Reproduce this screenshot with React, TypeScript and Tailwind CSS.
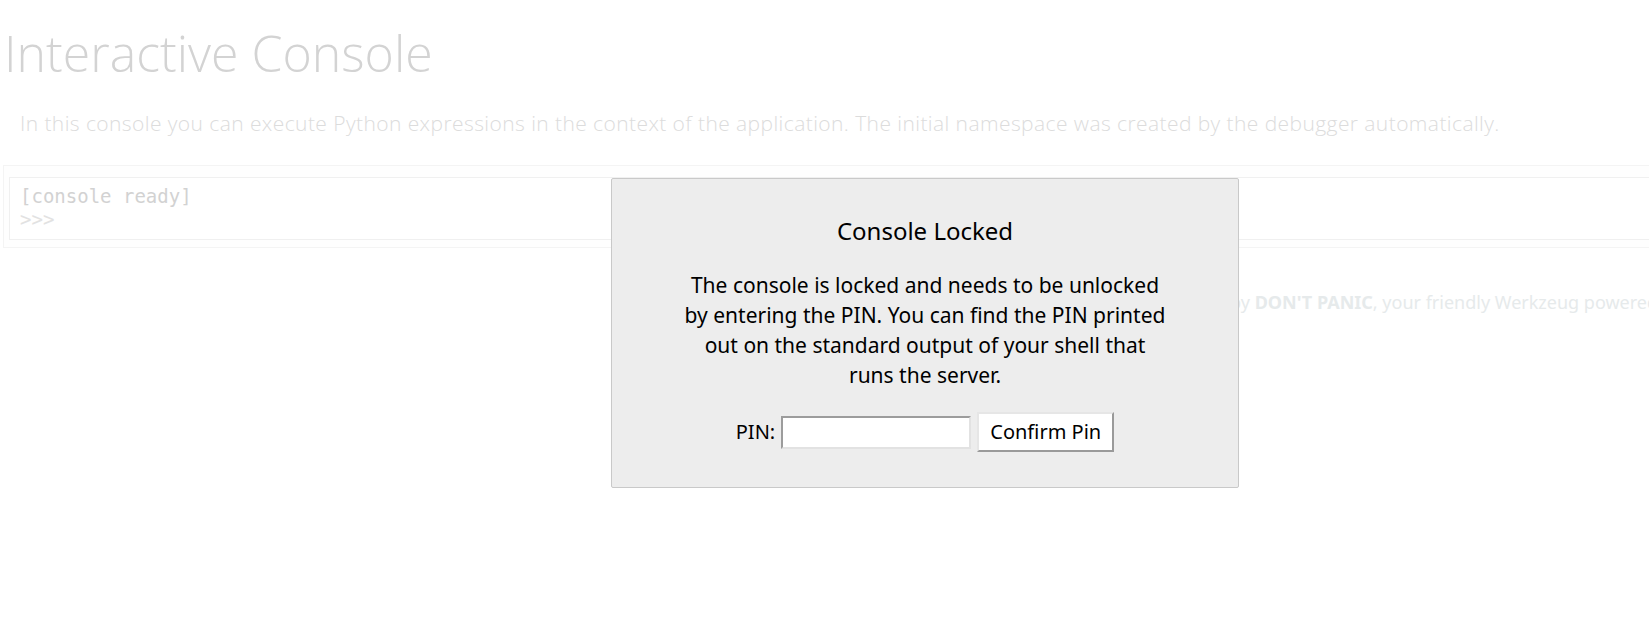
import React from "react";

export default function App() {
  return (
    <div className="relative w-[1649px] h-[641px] overflow-hidden bg-white">
      {/* page underneath (faded) */}
      <div className="w-[1900px] font-['Open_Sans',sans-serif]">
        <h1 className="mt-[28px] ml-[4px] text-[50px] leading-[50px] font-light text-[#d3d3d3] whitespace-nowrap">
          Interactive Console
        </h1>
        <p className="mt-[35px] ml-[20px] text-[21px] leading-[20px] tracking-[0.42px] font-light text-[#dcdcdc] whitespace-nowrap">
          In this console you can execute Python expressions in the context of the application. The initial namespace was created by the debugger automatically.
        </p>
        <div className="mt-[32px] ml-[3px] border border-[#f4f4f4] bg-[#fefefe] pt-[11px] pb-[7px] pl-[5px]">
          <div className="border border-[#f0f0f0] bg-white pt-[7px] pb-[8px] pl-[10px] font-['DejaVu_Sans_Mono',monospace] text-[19px] leading-[23px]">
            <div className="text-[#d2d2d2]">[console ready]</div>
            <div className="text-[#e2e2e2]">&gt;&gt;&gt;</div>
          </div>
        </div>
        <div className="mt-[42px] pl-[1098px] whitespace-nowrap font-['Noto_Sans',sans-serif] text-[18px] leading-[24px] text-[#e6eaeb]">
          Brought to you by <b className="font-bold">DON'T PANIC</b>, your friendly Werkzeug powered traceback interpreter.
        </div>
      </div>

      {/* PIN prompt overlay */}
      <div className="absolute inset-0">
        <div className="ml-[611px] mt-[178px] w-[628px] h-[310px] bg-[#ededed] border border-[#c9c9c9] rounded-[2px] font-['Noto_Sans',sans-serif] text-black text-center">
          <div className="pt-[37px] text-[24px] leading-[30px]">Console Locked</div>
          <p className="mt-[24px] text-[21px] leading-[30px]">
            The console is locked and needs to be unlocked
            <br />
            by entering the PIN. You can find the PIN printed
            <br />
            out on the standard output of your shell that
            <br />
            runs the server.
          </p>
          <div className="mt-[22px] flex items-center justify-center h-[40px] text-[20px]">
            <span className="mr-[6px]">PIN:</span>
            <input
              type="text"
              className="w-[190px] h-[33px] bg-white border-2 border-t-[#9c9c9c] border-l-[#9c9c9c] border-b-[#e2e2e2] border-r-[#e2e2e2] outline-none"
            />
            <button className="ml-[6px] w-[137px] h-[40px] bg-white border-2 border-t-[#e6e6e6] border-l-[#e6e6e6] border-b-[#9a9a9a] border-r-[#9a9a9a] text-[20px] leading-none text-black">
              Confirm Pin
            </button>
          </div>
        </div>
      </div>
    </div>
  );
}
